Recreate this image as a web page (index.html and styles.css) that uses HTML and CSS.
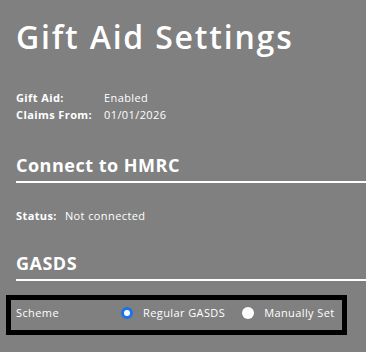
FILE: index.html
```html
<!DOCTYPE html>
<html lang="en">
<head>
    <meta charset="UTF-8">
    <meta name="viewport" content="width=device-width, initial-scale=1.0">
    <title>Gift Aid Settings</title>
    <link rel="stylesheet" href="styles.css">
</head>
<body>

    <main class="page">
        <h1>Gift Aid Settings</h1>

        <!-- Summary -->
        <div class="summary">
            <div class="row"><span class="label">Gift Aid:</span><span class="value">Enabled</span></div>
            <div class="row"><span class="label">Claims From:</span><span class="value">01/01/2026</span></div>
        </div>

        <!-- HMRC -->
        <h2>Connect to HMRC</h2>
        <div class="status"><span class="label">Status:</span><span class="value">Not connected</span></div>

        <!-- GASDS -->
        <h2 class="gasds-title">GASDS</h2>
        <div class="scheme-box">
            <span class="scheme-label">Scheme</span>
            <label class="option"><input type="radio" name="scheme" checked> Regular GASDS</label>
            <label class="option"><input type="radio" name="scheme"> Manually Set</label>
        </div>
    </main>

</body>
</html>
```

FILE: styles.css
```css
body {
    font-family: "Open Sans", Arial, sans-serif;
    margin: 0;
    padding: 0;
    background-color: #808080;
    color: #fff;
}
.page {
    padding: 0 0 0 16px;
}
h1 {
    font-size: 32px;
    font-weight: 600;
    line-height: 40px;
    letter-spacing: 1.8px;
    margin: 17px 0 0;
}
.summary {
    margin-top: 32px;
}
.row, .status {
    font-size: 11px;
    line-height: 17px;
    letter-spacing: 0.4px;
    display: flex;
}
.label {
    font-weight: 700;
}
.summary .label {
    width: 88px;
}
.status {
    margin-top: 24px;
}
.status .label {
    margin-right: 8px;
}
h2 {
    font-size: 18px;
    font-weight: 700;
    line-height: 24px;
    letter-spacing: 0.5px;
    margin: 30px 0 0;
    padding-bottom: 4px;
    border-bottom: 2px solid #fff;
}
.gasds-title {
    margin-top: 27px;
}
.scheme-box {
    display: flex;
    align-items: center;
    margin: 14px 0 0 -10px;
    width: 326px;
    height: 25px;
    border: 5px solid #000;
    padding: 0 0 5px 5px;
    font-size: 11px;
    letter-spacing: 0.4px;
    white-space: nowrap;
}
.scheme-label {
    width: 105px;
    flex-shrink: 0;
}
.option {
    display: flex;
    align-items: center;
    flex-shrink: 0;
    margin-right: 17px;
}
.option:last-child {
    margin-right: 0;
}
.option input {
    appearance: none;
    width: 12px;
    height: 12px;
    margin: 0 10px 0 0;
    border-radius: 50%;
    background: #fff;
}
.option input:checked {
    border: 3px solid #1a73e8;
}
```
